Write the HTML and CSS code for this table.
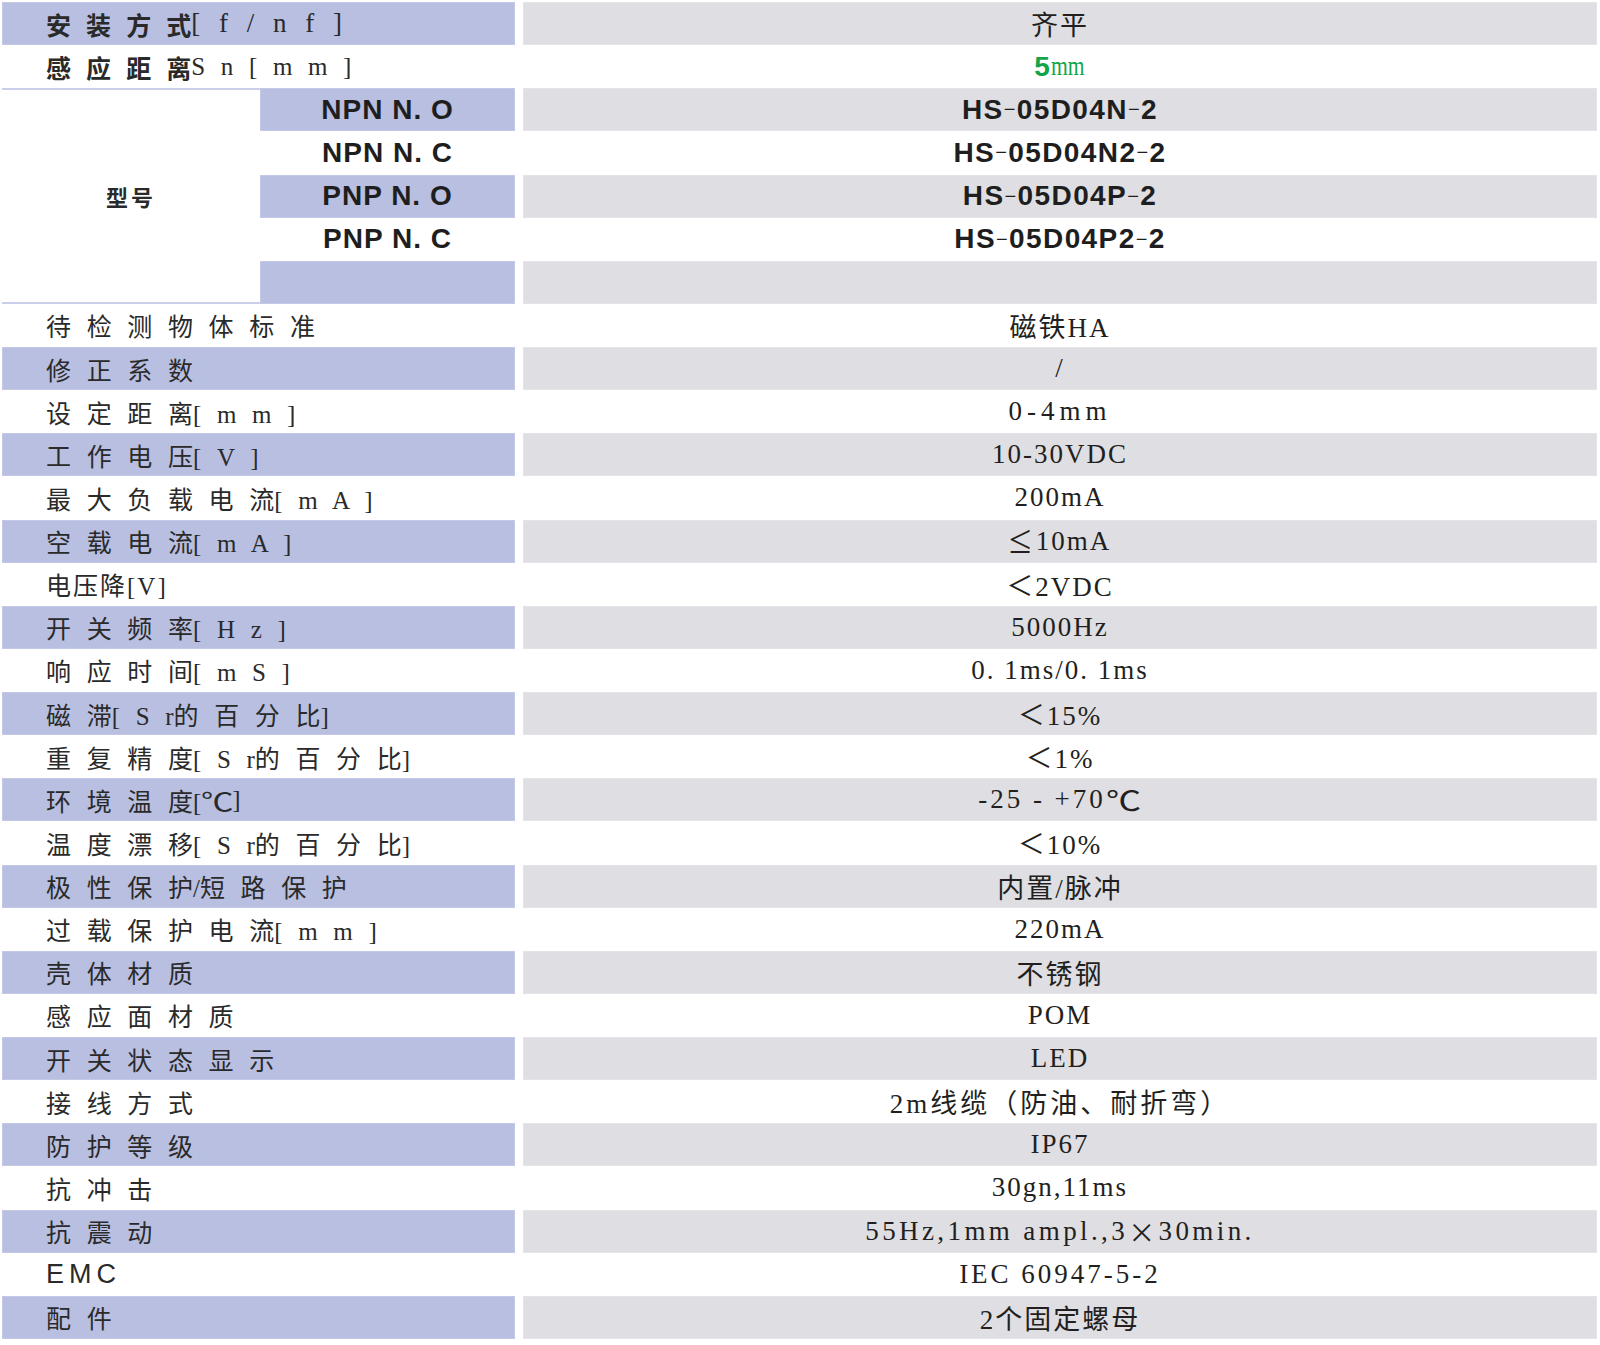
FILE: index.html
```html
<!DOCTYPE html>
<html lang="zh-CN">
<head>
<meta charset="utf-8">
<title>HS-05D04 参数</title>
<link rel="stylesheet" href="styles.css">
</head>
<body>
<div class="spec">
  <div class="lab band"><span class="bold">安 装 方 式</span><span class="big">[ f / n f ]</span></div>
  <div class="val band">齐平</div>

  <div class="lab"><span class="bold">感 应 距 离</span>S n [ m m ]</div>
  <div class="val green"><span class="five">5</span><span class="narrow">mm</span></div>

  <div class="model"><span class="bold">型号</span></div>
  <div class="sub band">NPN N. O</div>
  <div class="val band code">HS<span class="dash">−</span>05D04N<span class="dash">−</span>2</div>
  <div class="sub">NPN N. C</div>
  <div class="val code">HS<span class="dash">−</span>05D04N2<span class="dash">−</span>2</div>
  <div class="sub band">PNP N. O</div>
  <div class="val band code">HS<span class="dash">−</span>05D04P<span class="dash">−</span>2</div>
  <div class="sub">PNP N. C</div>
  <div class="val code">HS<span class="dash">−</span>05D04P2<span class="dash">−</span>2</div>
  <div class="sub band"></div>
  <div class="val band"></div>

  <div class="lab">待 检 测 物 体 标 准</div>
  <div class="val">磁铁HA</div>

  <div class="lab band">修 正 系 数</div>
  <div class="val band">/</div>

  <div class="lab">设 定 距 离[ m m ]</div>
  <div class="val wide">0-4mm</div>

  <div class="lab band">工 作 电 压[ V ]</div>
  <div class="val band">10-30VDC</div>

  <div class="lab">最 大 负 载 电 流[ m A ]</div>
  <div class="val">200mA</div>

  <div class="lab band">空 载 电 流[ m A ]</div>
  <div class="val band"><span class="le">≤</span>10mA</div>

  <div class="lab tight">电压降[V]</div>
  <div class="val">＜2VDC</div>

  <div class="lab band">开 关 频 率[ H z ]</div>
  <div class="val band">5000Hz</div>

  <div class="lab">响 应 时 间[ m S ]</div>
  <div class="val">0. 1ms/0. 1ms</div>

  <div class="lab band">磁 滞[ S r的 百 分 比]</div>
  <div class="val band">＜15%</div>

  <div class="lab">重 复 精 度[ S r的 百 分 比]</div>
  <div class="val">＜1%</div>

  <div class="lab band">环 境 温 度[<span class="cel">℃</span>]</div>
  <div class="val band wider">-25 - +70<span class="cel">℃</span></div>

  <div class="lab">温 度 漂 移[ S r的 百 分 比]</div>
  <div class="val">＜10%</div>

  <div class="lab band">极 性 保 护/短 路 保 护</div>
  <div class="val band">内置/脉冲</div>

  <div class="lab">过 载 保 护 电 流[ m m ]</div>
  <div class="val">220mA</div>

  <div class="lab band">壳 体 材 质</div>
  <div class="val band">不锈钢</div>

  <div class="lab">感 应 面 材 质</div>
  <div class="val">POM</div>

  <div class="lab band">开 关 状 态 显 示</div>
  <div class="val band">LED</div>

  <div class="lab">接 线 方 式</div>
  <div class="val wider">2m线缆（防油、耐折弯）</div>

  <div class="lab band">防 护 等 级</div>
  <div class="val band">IP67</div>

  <div class="lab">抗 冲 击</div>
  <div class="val">30gn,11ms</div>

  <div class="lab band">抗 震 动</div>
  <div class="val band widest">55Hz,1mm ampl.,3<span class="cjk">×</span>30min.</div>

  <div class="lab emc">EMC</div>
  <div class="val wider">IEC 60947-5-2</div>

  <div class="lab band">配 件</div>
  <div class="val band">2个固定螺母</div>
</div>
</body>
</html>
```

FILE: styles.css
```css
html, body {
  margin: 0;
  padding: 0;
  background: #ffffff;
}

body {
  width: 1600px;
  height: 1345px;
  overflow: hidden;
}

.spec {
  display: grid;
  grid-template-columns: 258px 255px 8px 1074px;
  grid-auto-rows: 43.13px;
  padding: 2px 0 0 2px;
  color: #231f20;
}

.lab {
  grid-column: 1 / 3;
  display: flex;
  align-items: center;
  padding-left: 44px;
  white-space: pre;
  font-family: "Liberation Serif", "Noto Sans CJK SC", serif;
  font-size: 25px;
  word-spacing: 9.4px;
  color: #2a2a2a;
}

.lab.tight {
  word-spacing: 0;
  letter-spacing: 2px;
}

.lab.emc {
  font-family: "Liberation Sans", "Noto Sans CJK SC", sans-serif;
  font-size: 27px;
  letter-spacing: 5px;
}

.bold {
  font-family: "Noto Sans CJK SC", sans-serif;
  font-weight: 700;
}

.big {
  font-size: 27px;
  word-spacing: 12px;
}

.cjk {
  font-family: "Noto Sans CJK SC", sans-serif;
}

.cel {
  display: inline-block;
  font-family: "Noto Sans CJK SC", sans-serif;
  transform: scaleX(1.3);
  transform-origin: left center;
  margin-right: 6px;
}

.model {
  grid-column: 1;
  grid-row: span 5;
  display: flex;
  align-items: center;
  justify-content: center;
  box-sizing: border-box;
  border-top: 2px solid #c9cfea;
  border-bottom: 2px solid #c9cfea;
  font-size: 22px;
  letter-spacing: 3px;
  color: #2a2a2a;
}

.sub {
  grid-column: 2;
  display: flex;
  align-items: center;
  justify-content: center;
  font-family: "Liberation Sans", sans-serif;
  font-weight: 700;
  font-size: 28px;
  letter-spacing: 1px;
  white-space: pre;
  color: #1e1e1e;
}

.val {
  grid-column: 4;
  display: flex;
  align-items: center;
  justify-content: center;
  white-space: pre;
  font-family: "Liberation Serif", "Noto Sans CJK SC", serif;
  font-size: 27px;
  letter-spacing: 2px;
}

.val.wide {
  letter-spacing: 5px;
}

.val.wider {
  letter-spacing: 3px;
}

.val.widest {
  letter-spacing: 3.4px;
}

.le {
  display: inline-block;
  font-family: "Liberation Serif", serif;
  transform: scale(1.5);
  transform-origin: center 60%;
  margin: 0 6px 0 4px;
}

.val.code {
  font-family: "Liberation Sans", sans-serif;
  font-weight: 700;
  font-size: 28px;
  letter-spacing: 1.4px;
  color: #1e1e1e;
}

.dash {
  font-weight: 400;
  font-size: 20px;
}

.val.green {
  color: #12a54a;
  letter-spacing: 0;
}

.five {
  font-family: "Liberation Sans", sans-serif;
  font-weight: 700;
  font-size: 28px;
  margin-right: 1px;
}

.narrow {
  display: inline-block;
  transform: scaleX(0.8);
  transform-origin: left center;
  margin-right: -7px;
}

.lab.band,
.sub.band {
  background: #b8bfe1;
  box-shadow: inset 0 0 0 1px #c2c8e6;
}

.val.band {
  background: #dedee3;
  box-shadow: inset 0 0 0 1px #e4e4e8;
}
```
